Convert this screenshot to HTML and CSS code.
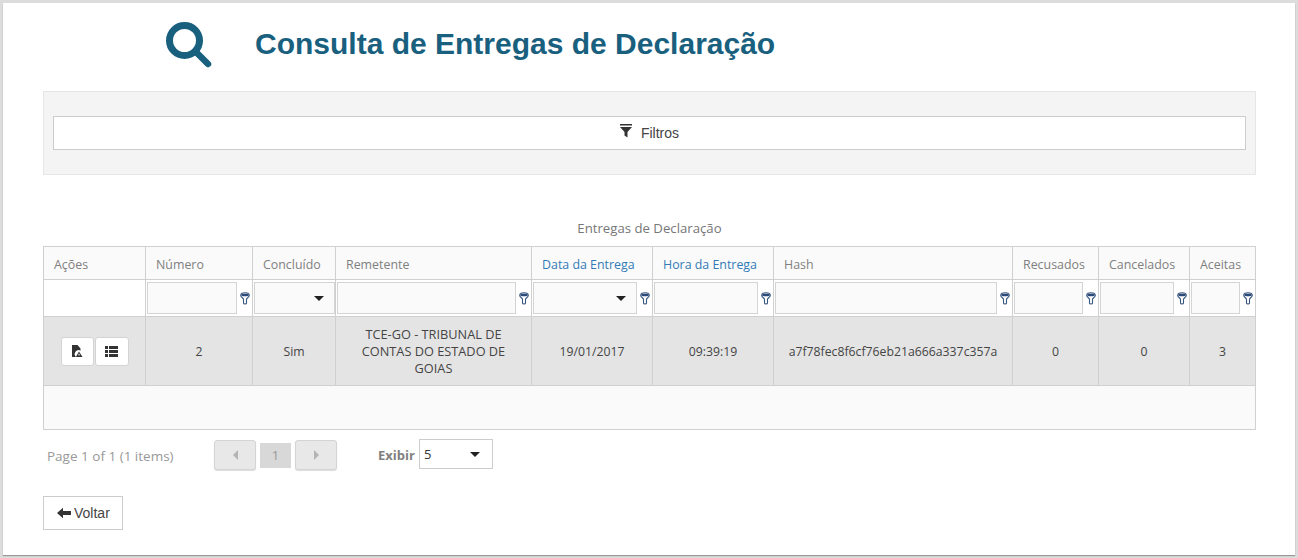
FILE: index.html
```html
<!DOCTYPE html>
<html lang="pt">
<head>
<meta charset="utf-8">
<title>Consulta de Entregas de Declaração</title>
<link rel="stylesheet" href="styles.css">
</head>
<body>
<svg class="defs" width="0" height="0" aria-hidden="true">
  <symbol id="fi" viewBox="0 0 10 13">
    <path d="M.7 3.2C.7 1.2 2.8.7 5 .7S9.3 1.2 9.3 3.2C9.3 5 6.9 6 6.5 7.2V11C6.5 12.3 3.5 12.3 3.5 11V7.2C3.1 6 .7 5 .7 3.2Z" fill="#fff" stroke="#36557f" stroke-width="1.1"/>
    <path d="M1 2.9C1 1.4 9 1.4 9 2.9C9 4.6 1 4.6 1 2.9Z" fill="#2c4a78"/>
  </symbol>
</svg>
<main class="window">
  <header class="head">
    <svg class="search" viewBox="0 0 46 46" aria-hidden="true">
      <circle cx="18.5" cy="18.5" r="15" fill="none" stroke="#19607f" stroke-width="7"/>
      <path d="M30 30L42 42" fill="none" stroke="#19607f" stroke-width="6.5" stroke-linecap="round"/>
    </svg>
    <h1 class="title">Consulta de Entregas de Declaração</h1>
  </header>

  <section class="panel">
    <button class="filter-btn" type="button">
      <svg class="funnel" viewBox="0 0 12 14" aria-hidden="true">
        <path d="M0 0H12V1.5H0ZM0 3H12L7.5 8V13.5L4.5 11.5V8Z" fill="#333"/>
      </svg>
      Filtros
    </button>
  </section>

  <div class="caption">Entregas de Declaração</div>

  <table class="grid">
    <colgroup>
      <col class="c1"><col class="c2"><col class="c3"><col class="c4"><col class="c5"><col class="c6"><col class="c7"><col class="c8"><col class="c9"><col class="c10">
    </colgroup>
    <thead>
      <tr class="hdr">
        <th>Ações</th><th>Número</th><th>Concluído</th><th>Remetente</th>
        <th class="sorted">Data da Entrega</th><th class="sorted">Hora da Entrega</th>
        <th>Hash</th><th>Recusados</th><th>Cancelados</th><th>Aceitas</th>
      </tr>
      <tr class="flt">
        <td></td>
        <td><div class="fc"><span class="box"></span><svg class="fi"><use href="#fi"/></svg></div></td>
        <td><div class="fc"><span class="box sel"><i class="caret"></i></span></div></td>
        <td><div class="fc"><span class="box"></span><svg class="fi"><use href="#fi"/></svg></div></td>
        <td><div class="fc"><span class="box sel"><i class="caret"></i></span><svg class="fi"><use href="#fi"/></svg></div></td>
        <td><div class="fc"><span class="box"></span><svg class="fi"><use href="#fi"/></svg></div></td>
        <td><div class="fc"><span class="box"></span><svg class="fi"><use href="#fi"/></svg></div></td>
        <td><div class="fc"><span class="box"></span><svg class="fi"><use href="#fi"/></svg></div></td>
        <td><div class="fc"><span class="box"></span><svg class="fi"><use href="#fi"/></svg></div></td>
        <td><div class="fc"><span class="box"></span><svg class="fi"><use href="#fi"/></svg></div></td>
      </tr>
    </thead>
    <tbody>
      <tr class="row">
        <td>
          <div class="actions">
            <button class="act" type="button" aria-label="Arquivo">
              <svg viewBox="0 0 12 13" width="12" height="13" aria-hidden="true">
                <path d="M1 0H6.5L9.5 3.5V5.5A4 4 0 0 0 5 12H1Z" fill="#333"/>
                <path d="M8 6.5L11.5 12H4.8ZM7.5 8.8V10.6H8.6V8.8Z" fill="#333" fill-rule="evenodd"/>
              </svg>
            </button>
            <button class="act wide" type="button" aria-label="Lista">
              <svg viewBox="0 0 13 11" width="13" height="11" aria-hidden="true">
                <path d="M0 0H3V3H0ZM4 0H13V3H4ZM0 4H3V7H0ZM4 4H13V7H4ZM0 8H3V11H0ZM4 8H13V11H4Z" fill="#333"/>
              </svg>
            </button>
          </div>
        </td>
        <td>2</td><td>Sim</td>
        <td class="rem">TCE-GO - TRIBUNAL DE CONTAS DO ESTADO DE GOIAS</td>
        <td>19/01/2017</td><td>09:39:19</td>
        <td>a7f78fec8f6cf76eb21a666a337c357a</td>
        <td>0</td><td>0</td><td>3</td>
      </tr>
      <tr class="empty"><td colspan="10"></td></tr>
    </tbody>
  </table>

  <nav class="pager">
    <span class="info">Page 1 of 1 (1 items)</span>
    <div class="pages">
      <span class="nav"><i class="tri left"></i></span>
      <span class="cur">1</span>
      <span class="nav"><i class="tri right"></i></span>
    </div>
    <b class="show">Exibir</b>
    <span class="size">5<i class="caret"></i></span>
  </nav>

  <button class="back" type="button">
    <svg viewBox="0 0 14 12" width="14" height="12" aria-hidden="true">
      <path d="M0 6L6 .8V4H14V8H6V11.2Z" fill="#333"/>
    </svg>
    Voltar
  </button>
</main>
</body>
</html>
```

FILE: styles.css
```css
* { box-sizing: border-box; }
html, body { margin: 0; height: 100%; }
body {
  padding: 3px;
  background: #dcdcdc;
  overflow: hidden;
  font-family: "Open Sans", sans-serif;
}
.defs { position: absolute; }
.window {
  width: 1292px;
  height: 552px;
  background: #fff;
  padding: 0 39px 0 40px;
  box-shadow: 0 1px 1px #999;
}
.head {
  display: flex;
  align-items: center;
  height: 88px;
  padding-left: 123px;
}
.search { width: 46px; height: 46px; margin-top: -4px; }
.title {
  margin: 0 0 7px 43px;
  font: bold 30px "Liberation Sans", Arial, sans-serif;
  color: #19607f;
}
.panel {
  height: 84px;
  background: #f4f4f4;
  border: 1px solid #e6e6e6;
  padding: 24px 9px 0;
}
.filter-btn {
  display: flex;
  align-items: center;
  justify-content: center;
  gap: 9px;
  width: 100%;
  height: 34px;
  background: #fff;
  border: 1px solid #ccc;
  font: 14px "Liberation Sans", Arial, sans-serif;
  color: #444;
}
.funnel { width: 12px; height: 14px; margin-top: -4px; }
.caption {
  margin-top: 45px;
  height: 26px;
  text-align: center;
  font-size: 13.2px;
  line-height: 17px;
  color: #777;
}
.grid {
  width: 1212px;
  table-layout: fixed;
  border-collapse: collapse;
  font-size: 12.25px;
}
.c1 { width: 102px; }
.c2 { width: 107px; }
.c3 { width: 83px; }
.c4 { width: 196px; }
.c5 { width: 121px; }
.c6 { width: 121px; }
.c7 { width: 239px; }
.c8 { width: 86px; }
.c9 { width: 91px; }
.c10 { width: 66px; }
.grid th, .grid td { border: 1px solid #d0d0d0; padding: 0; }
.hdr { height: 33px; background: #fafafa; }
.grid .hdr th {
  padding: 2px 0 0 10px;
  font-weight: 400;
  text-align: left;
  font-size: 12.4px;
  color: #808080;
  white-space: nowrap;
}
.grid .hdr th.sorted { color: #337ab7; }
.flt { height: 37px; background: #fff; }
.fc { display: flex; align-items: center; padding-left: 1px; height: 32px; }
.box {
  flex: 1;
  display: flex;
  align-items: center;
  justify-content: flex-end;
  height: 32px;
  background: #fafafa;
  border: 1px solid #d4d4d4;
  padding-right: 10px;
}
.fi { flex: none; width: 10px; height: 13px; margin: 0 2px 0 3px; }
.caret {
  display: block;
  width: 0; height: 0;
  border-left: 5.5px solid transparent;
  border-right: 5.5px solid transparent;
  border-top: 5px solid #222;
}
.row { height: 69px; background: #e4e4e4; }
.grid .row td { text-align: center; color: #444; }
.grid .row .rem { padding: 0 20px; line-height: 17px; font-size: 12.75px; }
.actions { display: flex; justify-content: center; gap: 1px; }
.act {
  display: flex;
  align-items: center;
  justify-content: center;
  width: 33px;
  height: 29px;
  padding: 0;
  background: #fff;
  border: 1px solid #d4d4d4;
  border-radius: 3px;
}
.act.wide { width: 34px; }
.empty { height: 44px; background: #fafafa; }
.pager {
  display: flex;
  align-items: center;
  height: 30px;
  margin-top: 10px;
  padding-left: 4px;
}
.info { width: 167px; padding-top: 2px; font-size: 13.5px; color: #999; white-space: nowrap; }
.pages { display: flex; align-items: center; gap: 4px; }
.nav {
  display: flex;
  align-items: center;
  justify-content: center;
  width: 42px;
  height: 30px;
  background: #e8e8e8;
  border: 1px solid #d4d4d4;
  border-radius: 3px;
  box-shadow: 0 1px 1px #ddd;
}
.tri { display: block; width: 0; height: 0; border-top: 5px solid transparent; border-bottom: 5px solid transparent; }
.tri.left { border-right: 5px solid #b4b4b4; }
.tri.right { border-left: 5px solid #b4b4b4; }
.cur {
  width: 31px;
  height: 25px;
  background: #d8d8d8;
  color: #999;
  text-align: center;
  font-size: 13px;
  line-height: 25px;
}
.show { margin-left: 41px; font-size: 13px; color: #808080; }
.size {
  display: flex;
  align-items: center;
  justify-content: space-between;
  width: 74px;
  height: 30px;
  margin: 0 0 2px 4px;
  padding: 0 12px 0 4px;
  border: 1px solid #ccc;
  font-size: 13px;
  color: #333;
}
.back {
  display: flex;
  align-items: center;
  gap: 3px;
  width: 80px;
  height: 34px;
  margin-top: 26px;
  padding: 0 0 0 13px;
  background: #fff;
  border: 1px solid #ccc;
  font: 14px "Liberation Sans", Arial, sans-serif;
  color: #444;
}
```
